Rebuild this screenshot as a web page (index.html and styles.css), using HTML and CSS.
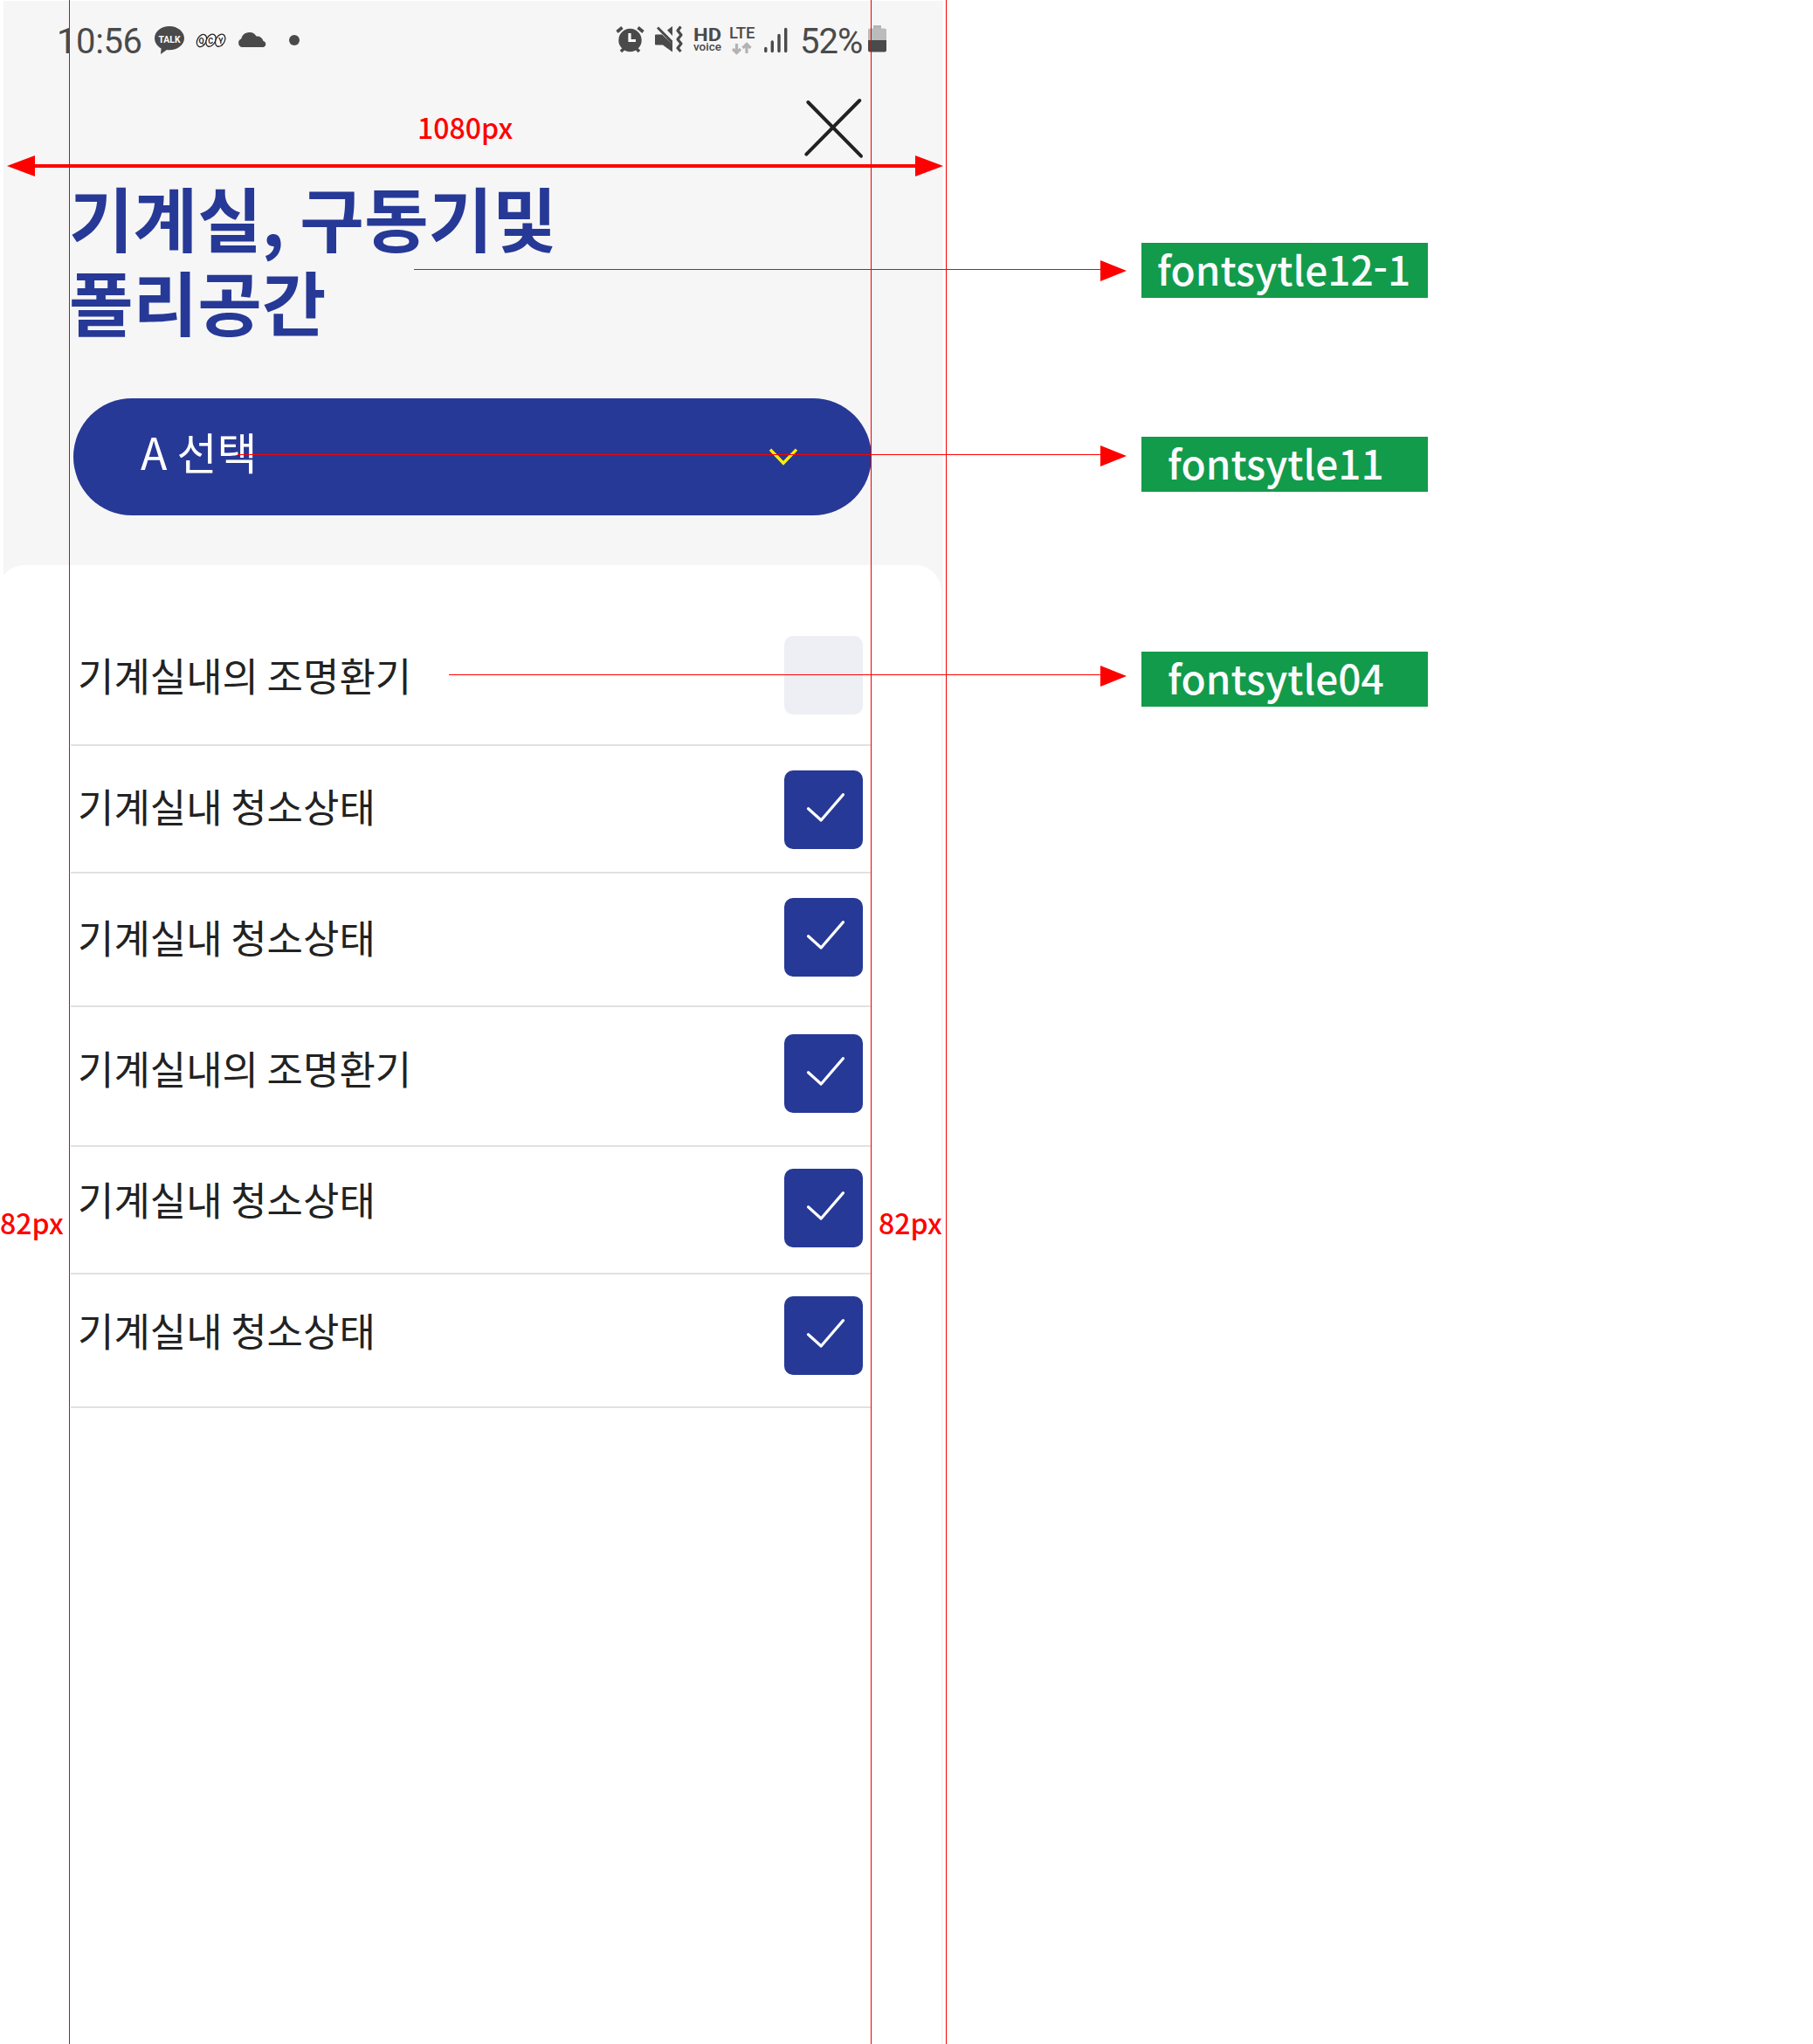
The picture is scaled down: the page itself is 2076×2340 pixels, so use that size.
FILE: index.html
```
<!DOCTYPE html>
<html lang="ko">
<head>
<meta charset="utf-8">
<title>기계실, 구동기및 폴리공간</title>
<link rel="stylesheet" href="styles.css">
</head>
<body>
<div class="board">
  <main class="phone">
    <header class="statusbar">
      <span class="clock">10:56</span>
      <svg class="ic-talk" width="34" height="32" viewBox="0 0 34 32"><path fill="#4a4a4a" d="M17 0C7.600 0 0 6 0 13.800c0 5 3.100 9.300 7.600 11.700L7 32l7-4.900c1 .1 2 .2 3 .2 9.400 0 17-6 17-13.500S26.400 0 17 0z"/><text x="17" y="18.600" class="talk-text" textLength="25" lengthAdjust="spacingAndGlyphs">TALK</text></svg>
      <svg class="ic-qcy" width="36" height="32" viewBox="0 0 36 32"><g fill="#fff" stroke="#2b2424" stroke-width="1.300"><ellipse cx="7" cy="16.500" rx="5" ry="7.500" transform="rotate(28 7 16.500)"/><ellipse cx="17.500" cy="16.200" rx="5" ry="7.500" transform="rotate(28 17.500 16.200)"/><ellipse cx="28.200" cy="16.200" rx="5" ry="7.500" transform="rotate(28 28.200 16.200)"/></g><g class="qcy-text"><text x="6.500" y="20">Q</text><text x="17.300" y="20">C</text><text x="28.800" y="20">Y</text></g></svg>
      <svg class="ic-cloud" width="33" height="32" viewBox="0 0 33 32"><path fill="#4a4a4a" d="M5 24a5 5 0 0 1-.8-9.500A9.500 9.500 0 0 1 21.500 11.500a7 7 0 0 1 8 5.500A3.600 3.600 0 0 1 29.500 24z"/></svg>
      <span class="dot"></span>
      <span class="spacer"></span>
      <svg class="ic-alarm" width="34" height="32" viewBox="0 0 34 32"><circle cx="16.500" cy="16" r="13.200" fill="#4a4a4a"/><path d="M1.500 6.500l6-5M31.500 6.500l-6-5M6 29l4-4M27 29l-4-4" stroke="#4a4a4a" stroke-width="3.600"/><path d="M16 8v8.500h7" fill="none" stroke="#fff" stroke-width="3.200"/></svg>
      <svg class="ic-mute" width="32" height="32" viewBox="0 0 32 32"><g fill="#4a4a4a"><path d="M0 10.500a1 1 0 0 1 1-1h7l12 11.500v8.500L9 21.500H1a1 1 0 0 1-1-1zM14 4.500L20 0v11zM2 2.500L4 .5l16 16v4.500z"/></g><path d="M29.500 .5l-3.500 4.500 4 5-4 5 4 5-4 5 3.500 4" fill="none" stroke="#4a4a4a" stroke-width="3.200" stroke-linejoin="round"/></svg>
      <svg class="ic-hd" width="33" height="32" viewBox="0 0 33 32"><text class="hd" x="0" y="16.700" textLength="32" lengthAdjust="spacingAndGlyphs">HD</text><text class="voice" x="0" y="27.600" textLength="32" lengthAdjust="spacingAndGlyphs">voice</text></svg>
      <svg class="ic-lte" width="30" height="33" viewBox="0 0 30 33"><text class="lte" x="0" y="14" textLength="29.500" lengthAdjust="spacingAndGlyphs">LTE</text><path d="M8.500 20v11M4 26l4.500 4.500L13 26M20 31V20M15.500 25l4.500-4.500 4.500 4.500" fill="none" stroke="#b3b3b3" stroke-width="3.200"/></svg>
      <svg class="ic-signal" width="28" height="32" viewBox="0 0 28 32"><path d="M1.800 25.500v3M9.300 18v10.500M17 10.500v18M24.700 3.500v25" stroke="#4a4a4a" stroke-width="3.400" stroke-linecap="round"/></svg>
      <span class="battery-text">52%</span>
      <svg class="ic-battery" width="21" height="32" viewBox="0 0 21 32"><path d="M6 0h9v4H6z" fill="#b5b5b5"/><path d="M2 3.500h17a2 2 0 0 1 2 2V18H0V5.500a2 2 0 0 1 2-2z" fill="#bbb"/><path d="M0 17h21v11.500a2 2 0 0 1-2 2H2a2 2 0 0 1-2-2z" fill="#4a4a4a"/></svg>
    </header>
    <div class="toolbar">
      <svg width="70" height="72" viewBox="0 0 70 72"><path d="M5.300 6l60.700 61.700M3.300 65.700L64.300 4" stroke="#222" stroke-width="4" stroke-linecap="round"/></svg>
    </div>
    <h1 class="title">기계실, 구동기및<br>폴리공간</h1>
    <div class="select">
      <span class="select-label">A 선택</span>
      <svg width="36" height="22" viewBox="0 0 36 22"><path d="M3 2.600L18 18.200 33 2.600" fill="none" stroke="#ffee00" stroke-width="3.400"/></svg>
    </div>
    <ul class="sheet">
      <li class="row row-1"><span class="label">기계실내의 조명환기</span><span class="box off"></span></li>
      <li class="row row-2"><span class="label">기계실내 청소상태</span><span class="box"><svg width="90" height="90" viewBox="0 0 90 90"><path class="tick" d="M27.500 43.700L42.200 57 67.500 27.600"/></svg></span></li>
      <li class="row row-3"><span class="label">기계실내 청소상태</span><span class="box"><svg width="90" height="90" viewBox="0 0 90 90"><path class="tick" d="M27.500 43.700L42.200 57 67.500 27.600"/></svg></span></li>
      <li class="row row-4"><span class="label">기계실내의 조명환기</span><span class="box"><svg width="90" height="90" viewBox="0 0 90 90"><path class="tick" d="M27.500 43.700L42.200 57 67.500 27.600"/></svg></span></li>
      <li class="row row-5"><span class="label">기계실내 청소상태</span><span class="box"><svg width="90" height="90" viewBox="0 0 90 90"><path class="tick" d="M27.500 43.700L42.200 57 67.500 27.600"/></svg></span></li>
      <li class="row row-6"><span class="label">기계실내 청소상태</span><span class="box"><svg width="90" height="90" viewBox="0 0 90 90"><path class="tick" d="M27.500 43.700L42.200 57 67.500 27.600"/></svg></span></li>
    </ul>
  </main>
  <aside class="tags">
    <div class="tag tag-title">fontsytle12-1</div>
    <div class="tag tag-select">fontsytle11</div>
    <div class="tag tag-row">fontsytle04</div>
  </aside>

  <!-- Measurement overlay -->
  <svg class="guides" width="2076" height="2340" viewBox="0 0 2076 2340">
    <g fill="#f00000"><rect x="79" y="0" width="1" height="2340"/><rect x="997" y="0" width="1" height="2340"/><rect x="1083" y="0" width="1" height="2340"/></g>
    <g fill="#ff0000">
      <rect x="38" y="188" width="1012" height="4"/><path d="M8 190l32-12v24zM1080 190l-32-12v24z"/>
      <rect x="474" y="308" width="788" height="1"/><path d="M1290 310l-30-12v24z"/>
      <rect x="272" y="520" width="990" height="1"/><path d="M1290 522l-30-12v24z"/>
      <rect x="514" y="772" width="748" height="1"/><path d="M1290 774l-30-12v24z"/>
    </g>
  </svg>
  <span class="measure m-width">1080px</span>
  <span class="measure m-left">82px</span>
  <span class="measure m-right">82px</span>
</div>
</body>
</html>
```
FILE: styles.css
```
* { box-sizing: border-box; }
body {
  margin: 0;
  background: #fff;
  font-family: "Noto Sans CJK KR", sans-serif;
}
svg { display: block; flex: none; overflow: visible; }
.board {
  position: relative;
  display: flex;
  width: 2076px;
  height: 2340px;
  overflow: hidden;
}
.phone {
  display: flex;
  flex-direction: column;
  width: 1076px;
  margin: 1px 0 0 4px;
  background: #f6f6f6;
  overflow: hidden;
}

/* Status bar */
.statusbar {
  display: flex;
  align-items: flex-start;
  height: 111px;
  padding: 29px 65px 0 61px;
  color: #4a4a4a;
  font-family: Roboto, sans-serif;
  font-size: 40px;
  line-height: 35px;
}
.clock { width: 112px; letter-spacing: -.400px; }
.ic-qcy { margin-left: 13px; }
.ic-cloud { margin-left: 12px; }
.dot {
  width: 12px;
  height: 12px;
  margin: 10px 0 0 26px;
  border-radius: 50%;
  background: #4a4a4a;
}
.spacer { flex: 1; }
.ic-mute { margin-left: 11px; }
.ic-hd { margin-left: 12px; }
.ic-lte { margin-left: 8px; }
.ic-signal { margin-left: 10px; }
.battery-text { width: 78px; margin-left: 13px; letter-spacing: -1px; }
.ic-battery { margin-top: -1px; }
.talk-text { font: 700 11.500px Roboto, sans-serif; fill: #fff; text-anchor: middle; }
.qcy-text { font: 700 9px Roboto, sans-serif; fill: #2b2424; text-anchor: middle; }
.hd { font: 700 20px Roboto, sans-serif; fill: #4a4a4a; }
.voice { font: 500 13px Roboto, sans-serif; fill: #4a4a4a; }
.lte { font: 500 18.500px Roboto, sans-serif; fill: #4a4a4a; }

/* Heading */
.toolbar {
  display: flex;
  justify-content: flex-end;
  height: 87px;
  padding: 0 90px 0 0;
}
.toolbar svg { margin-top: -1px; }
.title {
  margin: 0;
  padding-left: 75px;
  height: 257px;
  color: #273996;
  font-size: 80px;
  font-weight: 700;
  line-height: 96px;
  word-spacing: -5px;
}
.select {
  display: flex;
  align-items: flex-start;
  justify-content: space-between;
  flex: none;
  width: 914px;
  height: 134px;
  margin-left: 80px;
  padding: 23px 83px 0 77px;
  border-radius: 67px;
  background: #273996;
  color: #fff;
  font-size: 50px;
  line-height: 74px;
  word-spacing: -3px;
}
.select svg { margin-top: 33px; }

/* Checklist */
.sheet {
  flex: 1;
  width: 1080px;
  margin: 57px 0 0 -6px;
  padding: 0 83px;
  list-style: none;
  border-radius: 30px 30px 0 0;
  background: #fff;
}
.row {
  display: flex;
  align-items: flex-start;
  justify-content: space-between;
  width: 916px;
  padding: 0 9px 0 8px;
  border-bottom: 2px solid #e1e1e1;
}
.label { color: #222; font-size: 45px; line-height: 66px; word-spacing: -3px; }
.box { width: 90px; height: 90px; border-radius: 10px; background: #273996; }
.box.off { background: #eeeff4; }
.tick { fill: none; stroke: #fff; stroke-width: 3.200; stroke-linecap: round; stroke-linejoin: round; }
.row-1 { height: 207px; padding-top: 81px; }
.row-1 .label { margin-top: 12px; }
.row-2 { height: 146px; padding-top: 28px; }
.row-2 .label { margin-top: 8px; }
.row-3 { height: 153px; padding-top: 28px; }
.row-3 .label { margin-top: 12px; }
.row-4 { height: 160px; padding-top: 31px; }
.row-4 .label { margin-top: 6px; }
.row-5 { height: 146px; padding-top: 25px; }
.row-5 .label { margin-top: 2px; }
.row-6 { height: 153px; padding-top: 25px; }
.row-6 .label { margin-top: 6px; }

/* Style tags */
.tags { width: 328px; margin-left: 227px; padding-top: 278px; }
.tag {
  height: 63px;
  background: #129b4a;
  color: #fbfbfe;
  font-size: 46px;
  font-weight: 500;
  line-height: 58px;
  white-space: nowrap;
}
.tag-title { padding-left: 18px; }
.tag-select { margin-top: 159px; padding-left: 30px; }
.tag-row { margin-top: 183px; padding-left: 30px; }

/* Measurement overlay */
.guides { position: absolute; left: 0; top: 0; }
.measure {
  position: absolute;
  color: #ff0000;
  font-size: 32px;
  font-weight: 500;
  line-height: 48px;
}
.m-width { left: 478px; top: 121px; }
.m-left { left: 0; top: 1375px; }
.m-right { left: 1006px; top: 1375px; }
```
